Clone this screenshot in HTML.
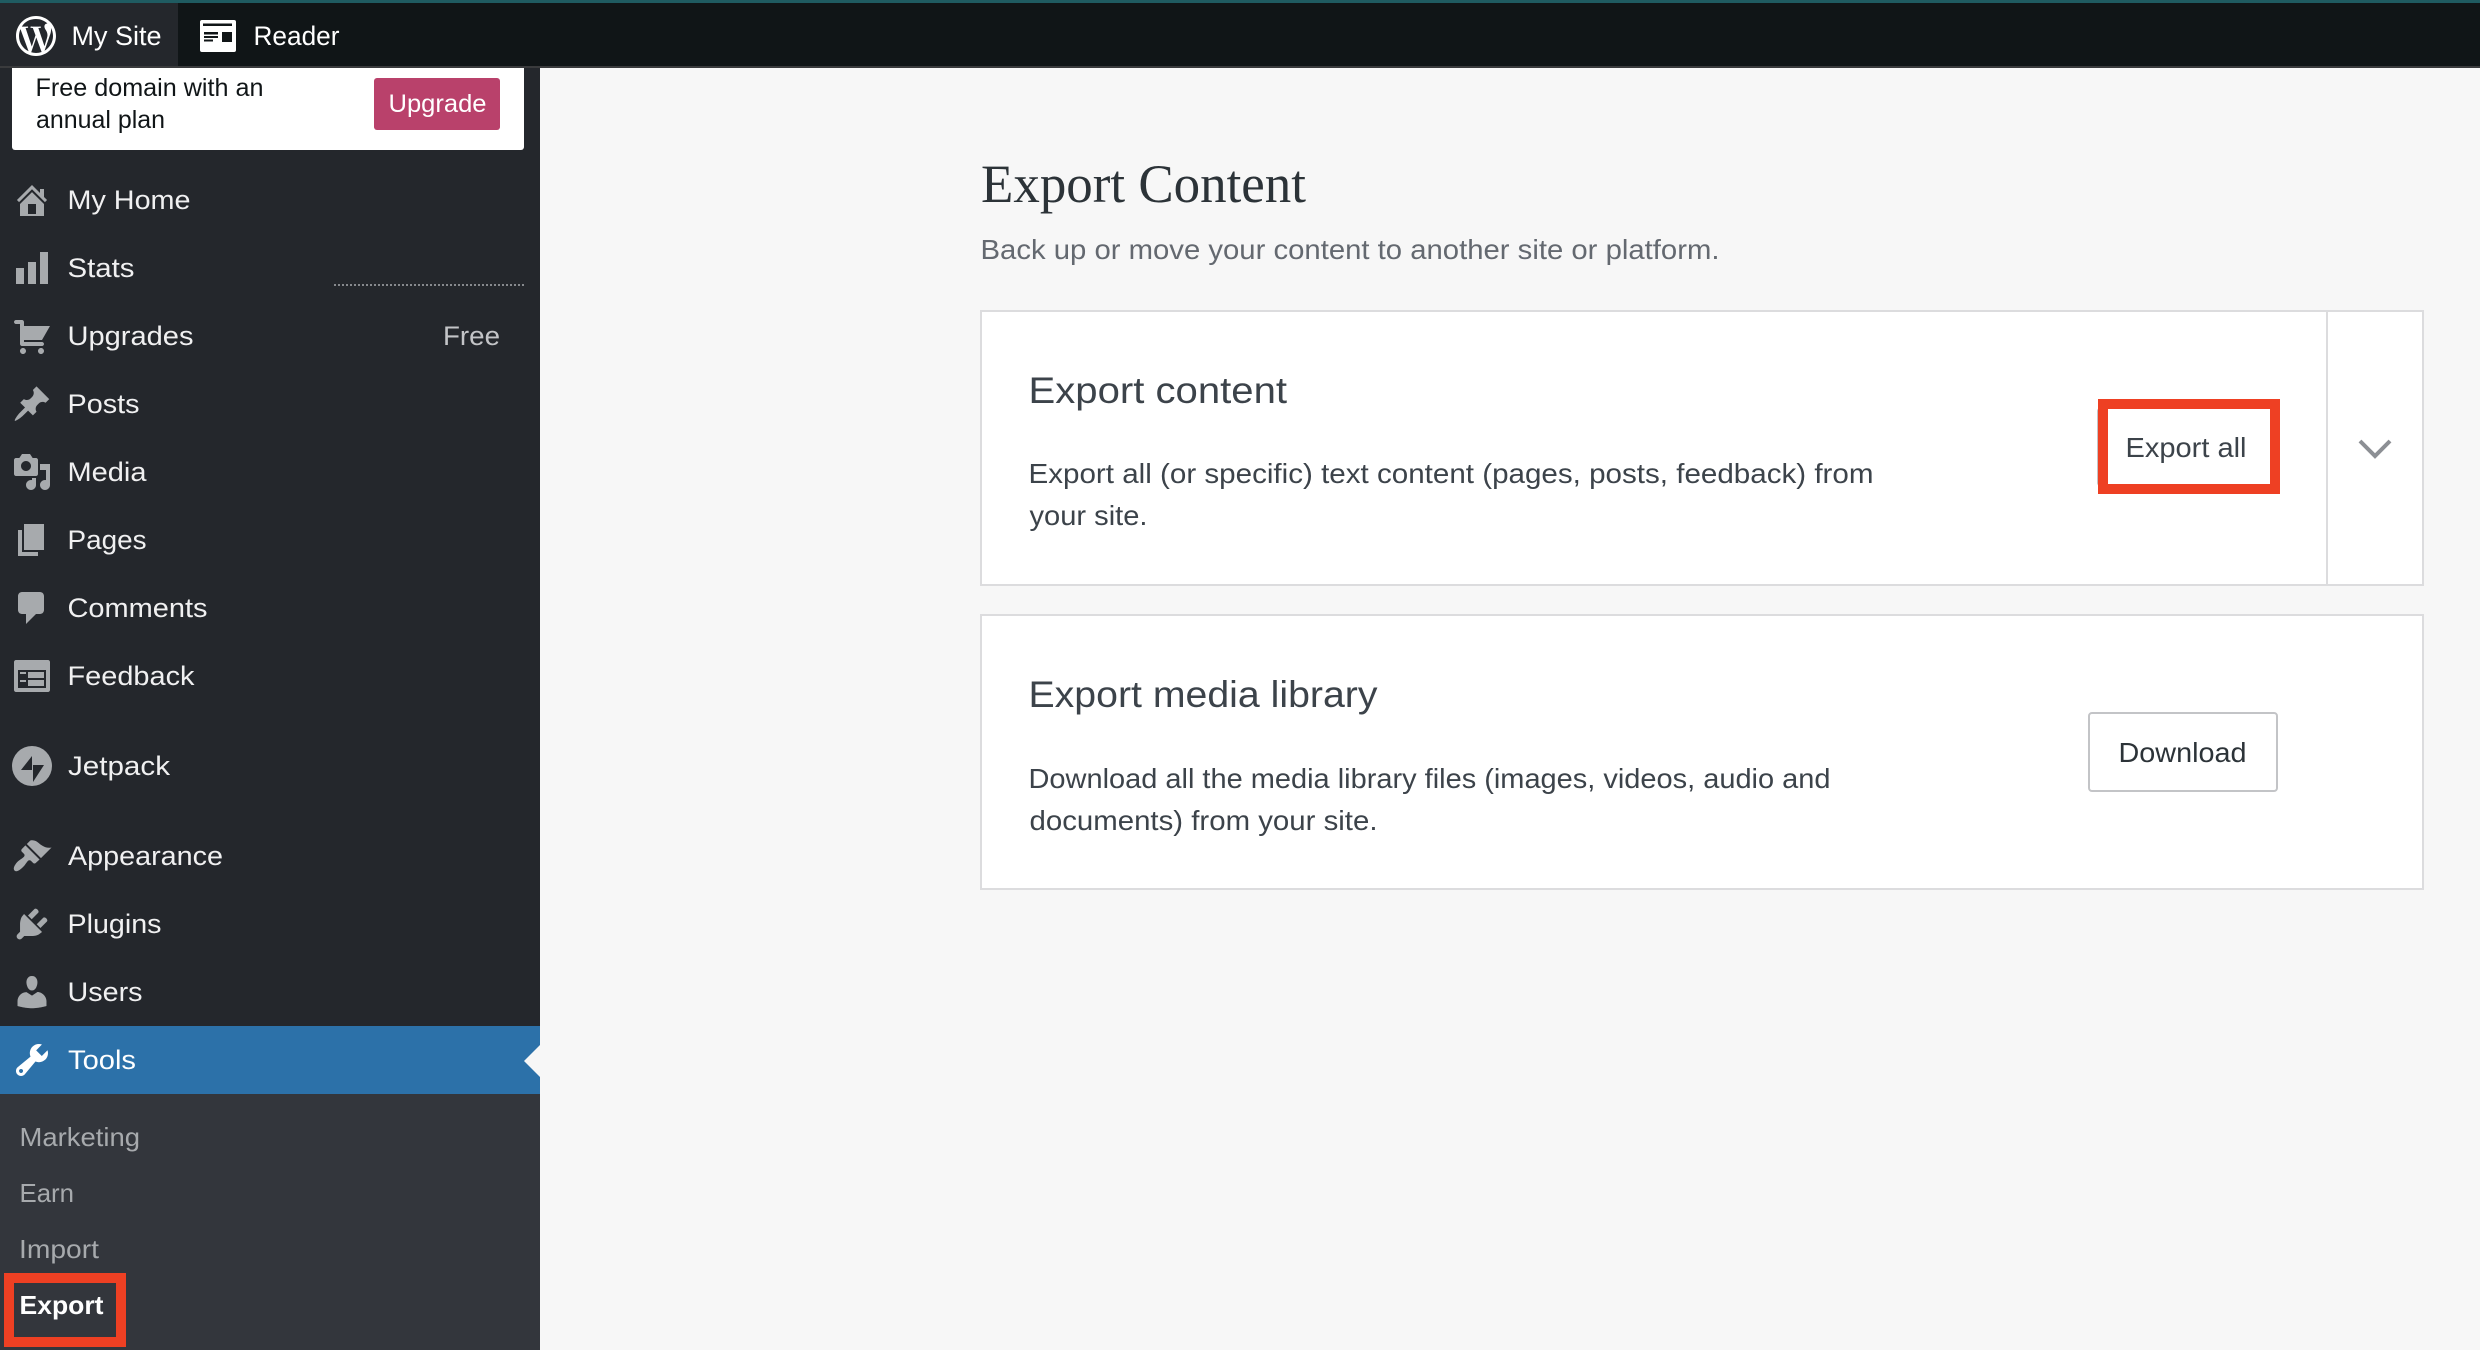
<!DOCTYPE html>
<html lang="en">
<head>
<meta charset="utf-8">
<title>Export Content</title>
<style>
html,body{margin:0;padding:0;background:#f7f7f7;width:2480px;height:1350px;overflow:hidden}
svg{display:block}
text{font-family:"Liberation Sans",sans-serif}
.n{font-size:27px;fill:#f0f0f1}
.s{font-size:26px;fill:#a7aaad}
.i{fill:#a7aaad}
.d{font-size:27.5px;fill:#3c434a}
</style>
</head>
<body>
<svg xmlns="http://www.w3.org/2000/svg" width="2480" height="1350" viewBox="0 0 2480 1350">
<rect width="2480" height="1350" fill="#f7f7f7"/>

<!-- sidebar -->
<rect x="0" y="66" width="540" height="1284" fill="#24272c"/>

<!-- top bar -->
<rect width="2480" height="66" fill="#101517"/>
<rect width="2480" height="3" fill="#1f5b61"/>
<rect y="66" width="2480" height="2" fill="#3a3b3d"/>
<rect y="3" width="178" height="63" fill="#24272c"/>
<g transform="translate(12 12) scale(2)" fill="#fff"><path d="M12 2C6.486 2 2 6.486 2 12s4.486 10 10 10 10-4.486 10-10S17.514 2 12 2zM3.5 12c0-1.232.264-2.402.736-3.459L8.291 19.65C5.455 18.272 3.5 15.364 3.5 12zm8.5 8.501c-.834 0-1.64-.122-2.401-.346l2.551-7.411 2.613 7.158c.017.042.038.081.061.117-.884.311-1.833.482-2.824.482zm1.172-12.486c.512-.027.973-.081.973-.081.458-.054.404-.727-.054-.701 0 0-1.377.108-2.266.108-.835 0-2.239-.108-2.239-.108-.459-.026-.512.674-.054.701 0 0 .434.054.892.081l1.324 3.629-1.86 5.579-3.096-9.208c.512-.027.973-.081.973-.081.458-.054.403-.727-.055-.701 0 0-1.376.108-2.265.108-.16 0-.347-.004-.547-.01C6.418 4.736 9.03 3.5 12 3.5c2.213 0 4.228.846 5.74 2.232-.037-.002-.073-.007-.111-.007-.835 0-1.427.727-1.427 1.509 0 .701.404 1.293.835 1.994.323.566.701 1.293.701 2.344 0 .727-.28 1.572-.647 2.748l-.848 2.833-3.071-9.138zm3.102 11.332l2.596-7.506c.485-1.213.647-2.182.647-3.045 0-.313-.021-.603-.057-.874.664 1.21 1.042 2.6 1.042 4.078 0 3.136-1.7 5.874-4.228 7.347z"/></g>
<text x="71.5" y="45" class="n" style="fill:#fff" textLength="90" lengthAdjust="spacingAndGlyphs">My Site</text>
<rect x="200" y="20" width="36" height="32" rx="2" fill="#fff"/>
<rect x="203" y="23.5" width="29" height="2.5" fill="#101517"/>
<rect x="204" y="32" width="14" height="2.5" fill="#101517"/>
<rect x="204" y="36" width="14" height="2" fill="#101517"/>
<rect x="204" y="39.5" width="9" height="2" fill="#101517"/>
<rect x="222" y="32" width="10" height="10" fill="#101517"/>
<text x="253.5" y="45" class="n" style="fill:#fff" textLength="86" lengthAdjust="spacingAndGlyphs">Reader</text>

<!-- upgrade card -->
<path d="M12 68H524V147a3 3 0 0 1-3 3H15a3 3 0 0 1-3-3z" fill="#fff"/>
<text x="35.5" y="96" font-size="25" fill="#101517" textLength="228" lengthAdjust="spacingAndGlyphs">Free domain with an</text>
<text x="36" y="128" font-size="25" fill="#101517" textLength="129" lengthAdjust="spacingAndGlyphs">annual plan</text>
<rect x="374" y="78" width="126" height="52" rx="3" fill="#b9416b"/>
<text x="388.5" y="112" font-size="25" fill="#fff" textLength="98" lengthAdjust="spacingAndGlyphs">Upgrade</text>

<!-- dotted separator -->
<line x1="334" y1="285" x2="524" y2="285" stroke="#a7aaad" stroke-width="1.6" stroke-dasharray="2 2"/>

<!-- nav icons -->
<g class="i" fill-rule="evenodd">
<g transform="translate(12 180) scale(2)"><path d="M16 8.5l1.53 1.53-1.06 1.06L10 4.62l-6.47 6.47-1.06-1.06L10 2.5l4 4v-2h2v4zm-6-2.46l6 5.99V18H4v-5.97zM12 17v-5H8v5h4z"/></g>
<g transform="translate(12 248) scale(2)"><path d="M18 18V2h-4v16h4zm-6 0V7H8v11h4zm-6 0v-8H2v8h4z"/></g>
<g transform="translate(12 316) scale(2)"><path d="M6 13h9c.55 0 1 .45 1 1s-.45 1-1 1H5c-.55 0-1-.45-1-1V4H2c-.55 0-1-.45-1-1s.45-1 1-1h3c.55 0 1 .45 1 1v2h13l-4 7H6v1zm-.5 3c.83 0 1.5.67 1.5 1.5S6.33 19 5.5 19 4 18.33 4 17.5 4.67 16 5.5 16zm9 0c.83 0 1.5.67 1.5 1.5s-.67 1.5-1.5 1.5-1.5-.67-1.5-1.5.67-1.5 1.5-1.5z"/></g>
<g transform="translate(12 384) scale(2)"><path d="M10.44 3.02l1.82-1.82 6.36 6.35-1.83 1.82c-1.05-.68-2.48-.57-3.41.36l-.75.75c-.92.93-1.04 2.35-.35 3.41l-1.83 1.82-2.41-2.41-2.8 2.79c-.42.42-3.38 2.71-3.8 2.29s1.86-3.39 2.28-3.81l2.79-2.79L4.1 9.36l1.83-1.82c1.05.69 2.48.57 3.4-.36l.75-.75c.93-.92 1.05-2.35.36-3.41z"/></g>
<g transform="translate(12 452) scale(2)"><path d="M13 11V4c0-.55-.45-1-1-1h-1.67L9 1H5L3.67 3H2c-.55 0-1 .45-1 1v7c0 .55.45 1 1 1h10c.55 0 1-.45 1-1zM7 4.5c1.38 0 2.5 1.12 2.5 2.5S8.38 9.5 7 9.5 4.5 8.38 4.5 7 5.62 4.5 7 4.5zM14 6h5v10.5c0 1.38-1.12 2.5-2.5 2.5S14 17.88 14 16.5s1.12-2.5 2.5-2.5c.17 0 .34.02.5.05V9h-3V6zm-4 8.05V13h2v3.5c0 1.38-1.12 2.5-2.5 2.5S7 17.88 7 16.5 8.12 14 9.5 14c.17 0 .34.02.5.05z"/></g>
<g transform="translate(12 520) scale(2)"><path d="M6 15V2h10v13H6zm-1 1h8v2H3V5h2v11z"/></g>
<g transform="translate(12 588) scale(2)"><path d="M5 2h9c1.1 0 2 .9 2 2v7c0 1.1-.9 2-2 2h-2l-5 5v-5H5c-1.1 0-2-.9-2-2V4c0-1.1.9-2 2-2z"/></g>
<g transform="translate(12 656) scale(2)"><path d="M2 2h16c.55 0 1 .45 1 1v14c0 .55-.45 1-1 1H2c-.55 0-1-.45-1-1V3c0-.55.45-1 1-1zm15 14V7H3v9h14zM4 8v1h3V8H4zm4 0v3h8V8H8zm-4 4v1h3v-1H4zm4 0v3h8v-3H8z"/></g>
<path d="M32 746a20 20 0 1 0 0 40a20 20 0 1 0 0-40zM32 756V770H21zM33 782V765H44z"/>
<g transform="translate(12 836) scale(2)"><path d="M14.48 11.06L7.41 3.99l1.5-1.5c.5-.56 2.3-.47 3.51.32 1.21.8 1.43 1.28 2.91 2.1 1.18.64 2.45 1.26 4.45.85zM13.77 11.77L6.7 4.7 4.93 6.47c-.39.39-.39 1.02 0 1.41l1.06 1.06c.39.39.39 1.03 0 1.42-.6.6-1.43 1.11-2.21 1.69-.35.26-.7.53-1.01.84C1.9 13.8.5 15.7 1 16.9c.5 1.2 2 .7 3-.1.9-.7 1.7-1.4 2.34-2.19.58-.78 1.09-1.61 1.69-2.21.39-.39 1.03-.39 1.42 0l1.06 1.06c.39.39 1.02.39 1.41 0z"/></g>
<g transform="translate(12 904) scale(2)"><path d="M13.11 4.36L9.87 7.6 8 5.73l3.24-3.24c.35-.34 1.05-.2 1.56.32.52.51.66 1.21.31 1.55zm-8 1.77l.91-1.12 9.01 9.01-1.19.84c-.71.71-2.63 1.16-3.82 1.16H6.14L4.9 17.26c-.59.59-1.54.59-2.12 0-.59-.58-.59-1.53 0-2.12l1.24-1.24v-3.88c0-1.13.4-3.19 1.09-3.89zm7.26 3.97l3.24-3.24c.34-.35 1.04-.21 1.55.31.52.51.66 1.21.31 1.55l-3.24 3.25z"/></g>
<g transform="translate(12 972) scale(2)"><path d="M10 9.25c-2.27 0-2.73-3.44-2.73-3.44C7 4.02 7.82 2 9.97 2c2.16 0 2.98 2.02 2.71 3.81 0 0-.41 3.44-2.68 3.44zm0 2.57L12.72 10c2.39 0 4.52 2.33 4.52 4.53v2.49s-3.65 1.13-7.24 1.13c-3.65 0-7.24-1.13-7.24-1.13v-2.49c0-2.25 1.94-4.48 4.47-4.48z"/></g>
</g>

<!-- nav labels -->
<text x="67.5" y="209" class="n" textLength="123" lengthAdjust="spacingAndGlyphs">My Home</text>
<text x="67.5" y="277" class="n" textLength="67" lengthAdjust="spacingAndGlyphs">Stats</text>
<text x="67.5" y="345" class="n" textLength="126" lengthAdjust="spacingAndGlyphs">Upgrades</text>
<text x="443" y="345" class="n" style="fill:#c3c4c7" textLength="57" lengthAdjust="spacingAndGlyphs">Free</text>
<text x="67.5" y="413" class="n" textLength="72" lengthAdjust="spacingAndGlyphs">Posts</text>
<text x="67.5" y="481" class="n" textLength="79" lengthAdjust="spacingAndGlyphs">Media</text>
<text x="67.5" y="549" class="n" textLength="79" lengthAdjust="spacingAndGlyphs">Pages</text>
<text x="67.5" y="617" class="n" textLength="140" lengthAdjust="spacingAndGlyphs">Comments</text>
<text x="67.5" y="685" class="n" textLength="127" lengthAdjust="spacingAndGlyphs">Feedback</text>
<text x="68" y="775" class="n" textLength="102" lengthAdjust="spacingAndGlyphs">Jetpack</text>
<text x="68" y="865" class="n" textLength="155" lengthAdjust="spacingAndGlyphs">Appearance</text>
<text x="67.5" y="933" class="n" textLength="94" lengthAdjust="spacingAndGlyphs">Plugins</text>
<text x="67.5" y="1001" class="n" textLength="75" lengthAdjust="spacingAndGlyphs">Users</text>

<!-- tools -->
<rect y="1026" width="540" height="68" fill="#2c71a9"/>
<path d="M540 1045L524 1061L540 1077z" fill="#f7f7f7"/>
<g transform="translate(12 1040) scale(2)" fill="#fff"><path d="M16.68 9.77c-1.34 1.34-3.3 1.67-4.95.99l-5.41 6.52c-.99.99-2.59.99-3.58 0s-.99-2.59 0-3.57l6.52-5.42c-.68-1.65-.35-3.61.99-4.95 1.28-1.28 3.12-1.62 4.72-1.06l-2.89 2.89 2.82 2.82 2.86-2.87c.53 1.58.18 3.39-1.08 4.67zM3.81 16.21c.4.39 1.04.39 1.43 0 .4-.4.4-1.04 0-1.43-.39-.4-1.03-.4-1.43 0-.39.39-.39 1.03 0 1.43z"/></g>
<text x="68" y="1069" class="n" style="fill:#fff" textLength="68" lengthAdjust="spacingAndGlyphs">Tools</text>

<!-- submenu -->
<rect y="1094" width="540" height="256" fill="#33363c"/>
<text x="19.5" y="1146" class="s" textLength="120.5" lengthAdjust="spacingAndGlyphs">Marketing</text>
<text x="19.5" y="1202" class="s" textLength="54.5" lengthAdjust="spacingAndGlyphs">Earn</text>
<text x="19" y="1258" class="s" textLength="80" lengthAdjust="spacingAndGlyphs">Import</text>
<text x="19.5" y="1314" font-size="26" font-weight="700" fill="#fff" textLength="84" lengthAdjust="spacingAndGlyphs">Export</text>
<rect x="9" y="1278" width="112" height="64" fill="none" stroke="#ee4023" stroke-width="10"/>

<!-- content header -->
<text x="981" y="202" style="font-family:'Liberation Serif',serif" font-size="54" fill="#2c3338" textLength="325" lengthAdjust="spacingAndGlyphs">Export Content</text>
<text x="980.5" y="259" font-size="27.5" fill="#646970" textLength="739" lengthAdjust="spacingAndGlyphs">Back up or move your content to another site or platform.</text>

<!-- card 1 -->
<rect x="981" y="311" width="1442" height="274" fill="#fff" stroke="#dcdcde" stroke-width="2"/>
<rect x="2326" y="311" width="2" height="274" fill="#dcdcde"/>
<text x="1028.5" y="403" font-size="37.5" fill="#3c434a" textLength="258.5" lengthAdjust="spacingAndGlyphs">Export content</text>
<text x="1028.5" y="483" class="d" textLength="845" lengthAdjust="spacingAndGlyphs">Export all (or specific) text content (pages, posts, feedback) from</text>
<text x="1029.5" y="525" class="d" textLength="118" lengthAdjust="spacingAndGlyphs">your site.</text>
<rect x="2097" y="408" width="20" height="78" rx="3" fill="#c3c4c7"/>
<rect x="2103" y="404" width="172" height="85" fill="#fff" stroke="#ee4023" stroke-width="10"/>
<text x="2125.5" y="457" class="d" textLength="121" lengthAdjust="spacingAndGlyphs">Export all</text>
<path d="M2360 441L2375 456L2390 441" fill="none" stroke="#8c8f94" stroke-width="4"/>

<!-- card 2 -->
<rect x="981" y="615" width="1442" height="274" fill="#fff" stroke="#dcdcde" stroke-width="2"/>
<text x="1028.5" y="707" font-size="37.5" fill="#3c434a" textLength="349" lengthAdjust="spacingAndGlyphs">Export media library</text>
<text x="1028.5" y="788" class="d" textLength="802" lengthAdjust="spacingAndGlyphs">Download all the media library files (images, videos, audio and</text>
<text x="1029.5" y="830" class="d" textLength="348" lengthAdjust="spacingAndGlyphs">documents) from your site.</text>
<rect x="2089" y="713" width="188" height="78" rx="3" fill="#fff" stroke="#c3c4c7" stroke-width="2"/>
<text x="2118.5" y="762" font-size="28" fill="#2c3338" textLength="128" lengthAdjust="spacingAndGlyphs">Download</text>
</svg>
</body>
</html>
